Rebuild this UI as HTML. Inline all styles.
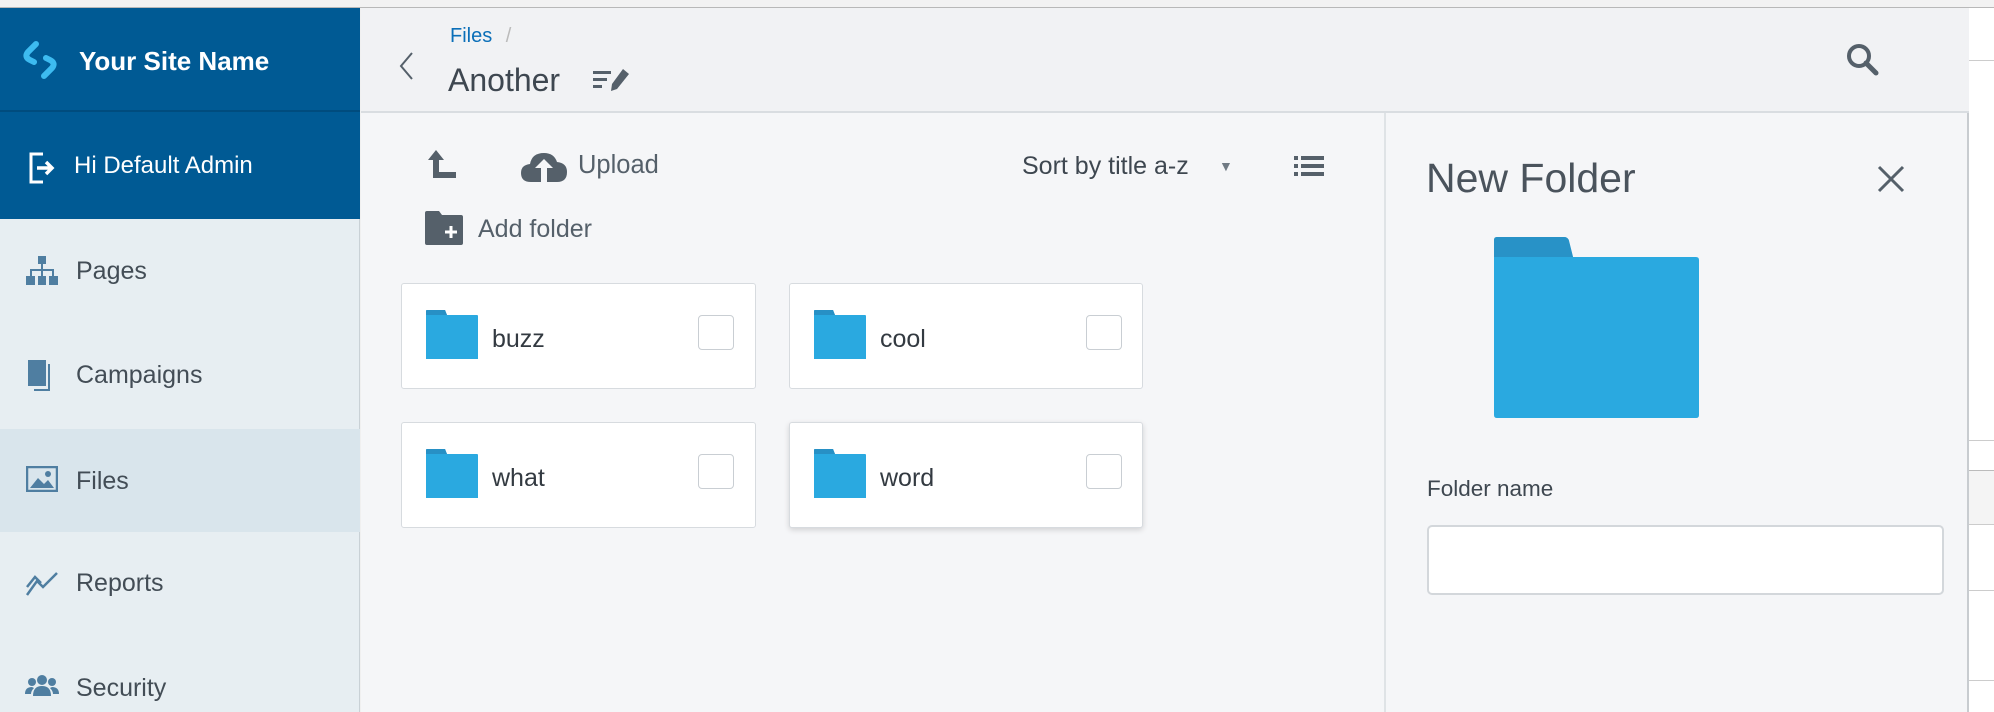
<!DOCTYPE html>
<html style="width:1994px;height:712px;overflow:hidden"><head><meta charset="utf-8"><style>
*{box-sizing:border-box;margin:0;padding:0}
body{width:1994px;height:712px;overflow:hidden;background:#f0f0f0;font-family:"Liberation Sans",Arial,sans-serif;position:relative}
.abs{position:absolute}
.top{left:0;top:0;width:1994px;height:8px;background:#f2f2f2;border-bottom:1px solid #b8b8b8}
.side{left:0;top:8px;width:360px;height:704px;background:#e7eef2;border-right:1px solid #c9d1d6}
.brand{left:0;top:8px;width:360px;height:104px;background:#005a94;border-bottom:2px solid #004c7e}
.admin{left:0;top:112px;width:360px;height:107px;background:#005a94}
.nav{left:0;width:360px;height:76px;overflow:hidden;color:#434d56;font-size:25px;line-height:104px;padding-left:76px}
.main{left:361px;top:8px;width:1608px;height:704px;background:#f5f6f8;border-right:2px solid #c8ccd0}
.hdr{left:361px;top:8px;width:1608px;height:105px;background:#f1f2f4;border-bottom:2px solid #d9dde1}
.card{background:#fff;border:1px solid #d7dbdf;border-radius:3px}
.chk{width:36px;height:35px;border:1px solid #c9ced3;border-radius:4px;background:#fff}
.ct{font-size:25px;color:#333a41}
.t{color:#55606a}
</style></head><body>
<div class="abs top"></div>
<div class="abs side"></div>
<div class="abs brand"></div>
<div class="abs admin"></div>
<svg class="abs" style="left:20px;top:40px" width="40" height="40" viewBox="0 0 40 40"><path d="M16 4 L8 12 Q4 17 10 20 L14 22" stroke="#3dbbf0" stroke-width="6" fill="none" stroke-linecap="round"/><path d="M24 36 L32 28 Q36 23 30 20 L26 18" stroke="#3dbbf0" stroke-width="6" fill="none" stroke-linecap="round"/></svg>
<div class="abs" style="left:79px;top:46px;color:#fff;font-weight:bold;font-size:26px">Your Site Name</div>
<svg class="abs" style="left:27px;top:151px" width="30" height="34" viewBox="0 0 30 34"><path d="M16 3H4V31H16" stroke="#fff" stroke-width="3" fill="none"/><path d="M10 17H24M19 11L25 17L19 23" stroke="#fff" stroke-width="3.5" fill="none"/></svg>
<div class="abs" style="left:74px;top:152px;color:#fff;font-size:24px">Hi Default Admin</div>
<div class="abs" style="left:0;top:429px;width:360px;height:103px;background:#d9e5ec"></div>
<div class="abs nav" style="top:219px;height:104px">Pages</div>
<div class="abs nav" style="top:323px;height:104px">Campaigns</div>
<div class="abs nav" style="top:429px;height:104px">Files</div>
<div class="abs nav" style="top:531px;height:104px">Reports</div>
<div class="abs nav" style="top:636px">Security</div>
<svg class="abs" style="left:26px;top:256px" width="32" height="30" viewBox="0 0 32 30"><g fill="#4f7ea1"><rect x="12" y="0" width="8" height="8"/><rect x="15" y="8" width="2" height="6"/><rect x="4" y="13" width="24" height="2"/><rect x="4" y="13" width="2" height="8"/><rect x="26" y="13" width="2" height="8"/><rect x="15" y="13" width="2" height="8"/><rect x="0" y="20" width="9" height="9"/><rect x="12" y="20" width="8" height="9"/><rect x="23" y="20" width="9" height="9"/></g></svg>
<svg class="abs" style="left:28px;top:360px" width="26" height="32" viewBox="0 0 26 32"><rect x="0" y="0" width="18" height="26" fill="#4f7ea1"/><path d="M21 4V30H6" stroke="#4f7ea1" stroke-width="2" fill="none"/></svg>
<svg class="abs" style="left:26px;top:466px" width="32" height="26" viewBox="0 0 32 26"><rect x="1" y="1" width="30" height="24" fill="none" stroke="#4f7ea1" stroke-width="2.5"/><path d="M4 22L12 12L18 18L22 14L28 22Z" fill="#4f7ea1"/><circle cx="22" cy="8" r="3" fill="#4f7ea1"/></svg>
<svg class="abs" style="left:25px;top:569px" width="34" height="28" viewBox="0 0 34 28"><path d="M2 26L12 12L18 18L32 4M2 18L10 8L16 14" stroke="#4f7ea1" stroke-width="2.5" fill="none"/></svg>
<svg class="abs" style="left:25px;top:674px" width="34" height="24" viewBox="0 0 34 24"><g fill="#4f7ea1"><circle cx="17" cy="6" r="5"/><path d="M8 22Q8 12 17 12Q26 12 26 22Z"/><circle cx="7" cy="8" r="4"/><circle cx="27" cy="8" r="4"/><path d="M0 20Q0 13 7 13L9 14Q6 17 6 20Z"/><path d="M34 20Q34 13 27 13L25 14Q28 17 28 20Z"/></g></svg>

<div class="abs main"></div>
<div class="abs hdr"></div>
<div class="abs" style="left:1969px;top:8px;width:25px;height:704px;background:#fff"></div>
<div class="abs" style="left:1969px;top:60px;width:25px;height:1px;background:#ccc"></div>
<div class="abs" style="left:1969px;top:440px;width:25px;height:1px;background:#ccc"></div>
<div class="abs" style="left:1969px;top:470px;width:25px;height:55px;background:#f4f4f4;border-top:1px solid #bbb;border-bottom:1px solid #ccc"></div>
<div class="abs" style="left:1969px;top:590px;width:25px;height:1px;background:#ccc"></div>
<div class="abs" style="left:1969px;top:680px;width:25px;height:1px;background:#ccc"></div>

<svg class="abs" style="left:398px;top:51px" width="18" height="30" viewBox="0 0 18 30"><path d="M14 2L3 15L14 28" stroke="#55606a" stroke-width="2" fill="none"/></svg>
<div class="abs" style="left:450px;top:25px;font-size:20px;color:#0b6fb8">Files <span style="color:#bbb;margin-left:8px">/</span></div>
<div class="abs" style="left:448px;top:62px;font-size:32px;color:#3e4750">Another</div>
<svg class="abs" style="left:593px;top:68px" width="40" height="24" viewBox="0 0 40 24"><g fill="#55606a"><rect x="0" y="3" width="18" height="3"/><rect x="0" y="10" width="14" height="3"/><rect x="0" y="17" width="9" height="3"/><path d="M30 1L36 6L24 21L18 23L19 16Z"/></g></svg>
<svg class="abs" style="left:1846px;top:43px" width="34" height="34" viewBox="0 0 34 34"><circle cx="13" cy="13" r="10" stroke="#55606a" stroke-width="4" fill="none"/><path d="M20 20L30 30" stroke="#55606a" stroke-width="5" stroke-linecap="round"/></svg>

<div class="abs" style="left:1384px;top:113px;width:2px;height:599px;background:#dfe3e6"></div>

<svg class="abs" style="left:428px;top:150px" width="30" height="30" viewBox="0 0 30 30"><path d="M8 0L16 10H11V22H28V28H5V10H0Z" fill="#55606a"/></svg>
<svg class="abs" style="left:521px;top:150px" width="46" height="32" viewBox="0 0 46 32"><path d="M10 32Q0 32 0 23Q0 15 9 14Q11 3 23 3Q33 3 36 12Q46 13 46 22Q46 32 36 32Z" fill="#55606a"/><path d="M23 9L32 18H26V32H20V18H14Z" fill="#f5f6f8"/></svg>
<div class="abs t" style="left:578px;top:151px;font-size:25.5px">Upload</div>
<div class="abs" style="left:1022px;top:152px;font-size:25px;color:#3e4750">Sort by title a-z</div>
<div class="abs" style="left:1219px;top:158px;font-size:14px;color:#707a84">▼</div>
<svg class="abs" style="left:1294px;top:155px" width="30" height="22" viewBox="0 0 30 22"><g fill="#55606a"><rect x="0" y="1" width="4" height="4"/><rect x="7" y="1" width="23" height="4"/><rect x="0" y="9" width="4" height="4"/><rect x="7" y="9" width="23" height="4"/><rect x="0" y="17" width="4" height="4"/><rect x="7" y="17" width="23" height="4"/></g></svg>
<svg class="abs" style="left:425px;top:211px" width="38" height="34" viewBox="0 0 38 34"><path d="M2 0H14L17 4H36Q38 4 38 6V32Q38 34 36 34H2Q0 34 0 32V2Q0 0 2 0Z" fill="#55606a"/><path d="M26 15V27M20 21H32" stroke="#fff" stroke-width="3"/></svg>
<div class="abs t" style="left:478px;top:215px;font-size:25px">Add folder</div>

<div class="abs card" style="left:401px;top:283px;width:355px;height:106px"></div>
<div class="abs card" style="left:789px;top:283px;width:354px;height:106px"></div>
<div class="abs card" style="left:401px;top:422px;width:355px;height:106px"></div>
<div class="abs card" style="left:789px;top:422px;width:354px;height:106px;box-shadow:0 2px 6px rgba(0,0,0,.15)"></div>
<svg width="0" height="0" style="position:absolute;left:0;top:0"><defs><g id="f"><path d="M0 1Q0 0 1 0H19L21 5H51Q52 5 52 6V49H0Z" fill="#2aa9e0"/><path d="M0 1Q0 0 1 0H19L21 5H0Z" fill="#2790c5"/></g></defs></svg>
<svg class="abs" style="left:426px;top:310px" width="52" height="49"><use href="#f"/></svg>
<svg class="abs" style="left:814px;top:310px" width="52" height="49"><use href="#f"/></svg>
<svg class="abs" style="left:426px;top:449px" width="52" height="49"><use href="#f"/></svg>
<svg class="abs" style="left:814px;top:449px" width="52" height="49"><use href="#f"/></svg>
<div class="abs ct" style="left:492px;top:325px">buzz</div>
<div class="abs ct" style="left:880px;top:325px">cool</div>
<div class="abs ct" style="left:492px;top:464px">what</div>
<div class="abs ct" style="left:880px;top:464px">word</div>
<div class="abs chk" style="left:698px;top:315px"></div>
<div class="abs chk" style="left:1086px;top:315px"></div>
<div class="abs chk" style="left:698px;top:454px"></div>
<div class="abs chk" style="left:1086px;top:454px"></div>

<div class="abs" style="left:1426px;top:155px;font-size:41px;color:#4a535c">New Folder</div>
<svg class="abs" style="left:1877px;top:165px" width="28" height="28" viewBox="0 0 28 28"><path d="M2 2L26 26M26 2L2 26" stroke="#55606a" stroke-width="3"/></svg>
<svg class="abs" style="left:1494px;top:237px" width="205" height="181" viewBox="0 0 205 181"><path d="M3 0H70Q74 0 75 4L79 20H202Q205 20 205 23V178Q205 181 202 181H3Q0 181 0 178V3Q0 0 3 0Z" fill="#2aa9e0"/><path d="M3 0H70Q74 0 75 4L79 20H0V3Q0 0 3 0Z" fill="#2892c7"/></svg>
<div class="abs" style="left:1427px;top:476px;font-size:22.5px;color:#3e4750">Folder name</div>
<div class="abs" style="left:1427px;top:525px;width:517px;height:70px;background:#fff;border:2px solid #d3d7db;border-radius:5px"></div>
</body></html>
